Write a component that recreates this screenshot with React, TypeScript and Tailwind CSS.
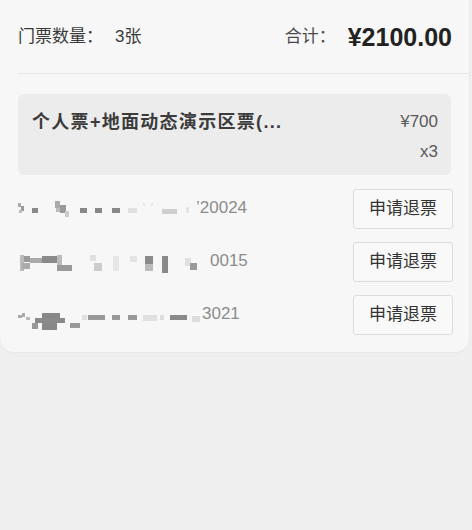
const font = '"Liberation Sans", "Noto Sans CJK SC", sans-serif'

type Block = [number, number, number, number, string]

// mosaic blocks that hide the holder names
const masks: { blocks: Block[]; tail: string; tailX: number }[] = [
  {
    blocks: [
      [0, 6, 3, 4, '#aaa'], [3, 9, 3, 5, '#999'], [1, 13, 3, 3, '#bbb'], [14, 11, 6, 5, '#8a8a8a'],
      [37, 4, 5, 7, '#aaa'], [38, 11, 4, 4, '#bbb'], [42, 8, 6, 8, '#999'], [47, 14, 4, 6, '#ccc'],
      [62, 11, 7, 5, '#888'], [77, 11, 7, 5, '#888'], [94, 11, 8, 5, '#888'],
      [110, 11, 9, 5, '#e0e0e0'], [125, 6, 2, 3, '#e8e8e8'], [133, 6, 2, 3, '#e8e8e8'],
      [144, 12, 15, 5, '#cfcfcf'], [168, 10, 3, 6, '#e4e4e4'],
    ],
    tail: '\u201920024',
    tailX: 178,
  },
  {
    blocks: [
      [2, 5, 4, 16, '#bbb'], [6, 6, 6, 6, '#999'], [4, 13, 8, 6, '#aaa'], [12, 8, 12, 5, '#aaa'],
      [24, 6, 15, 7, '#8a8a8a'], [39, 5, 5, 10, '#bbb'], [39, 15, 15, 6, '#999'],
      [72, 5, 6, 6, '#e0e0e0'], [76, 13, 8, 8, '#ccc'], [95, 6, 6, 15, '#e6e6e6'], [112, 6, 7, 6, '#e4e4e4'],
      [127, 6, 8, 8, '#8a8a8a'], [127, 14, 8, 7, '#bbb'], [144, 6, 6, 17, '#8a8a8a'],
      [167, 8, 6, 8, '#e0e0e0'], [172, 13, 7, 7, '#9a9a9a'],
    ],
    tail: '0015',
    tailX: 192,
  },
  {
    blocks: [
      [0, 12, 4, 3, '#aaa'], [4, 10, 3, 4, '#aaa'], [8, 14, 4, 3, '#bbb'],
      [24, 10, 18, 5, '#888'], [17, 15, 30, 5, '#8a8a8a'], [24, 20, 15, 7, '#888'], [14, 20, 6, 6, '#999'], [52, 20, 10, 5, '#999'],
      [64, 12, 5, 5, '#e0e0e0'], [70, 12, 17, 5, '#999'], [94, 12, 8, 5, '#999'], [110, 12, 9, 5, '#999'],
      [125, 12, 14, 6, '#e0e0e0'], [142, 12, 4, 5, '#ddd'], [152, 12, 17, 5, '#8a8a8a'], [174, 13, 8, 6, '#ddd'],
    ],
    tail: '3021',
    tailX: 184,
  },
]

function MaskedName({ blocks, tail, tailX }: { blocks: Block[]; tail: string; tailX: number }) {
  return (
    <div className="relative h-[24px] w-[240px]">
      <svg width="190" height="30" viewBox="0 0 190 30" className="absolute left-0 top-0">
        {blocks.map(([x, y, w, h, c], i) => (
          <rect key={i} x={x} y={y} width={w} height={h} fill={c} />
        ))}
      </svg>
      <span
        className="absolute top-[0px] text-[17px] leading-[22px] text-[#8c8c8c]"
        style={{ left: tailX }}
      >
        {tail}
      </span>
    </div>
  )
}

export default function App() {
  return (
    <div className="min-h-[530px] w-[472px] bg-[#efeff0]" style={{ fontFamily: font }}>
      <div className="w-[469px] rounded-b-[14px] bg-[#f7f7f7] pb-[17px] shadow-[0_1px_2px_rgba(0,0,0,0.04)]">
        {/* summary */}
        <div className="flex h-[73px] items-center justify-between pl-[18px] pr-[17px] pt-[1px]">
          <div className="text-[17px] text-[#3a3a3a]">
            门票数量：<span className="ml-[12px]">3张</span>
          </div>
          <div className="flex items-center">
            <span className="text-[17px] text-[#4a4a4a]">合计：</span>
            <span className="ml-[12px] text-[25px] font-bold leading-none text-[#222]">¥2100.00</span>
          </div>
        </div>
        <div className="ml-[18px] h-[1px] bg-[#e6e6e6]" />

        {/* ticket type */}
        <div className="mx-[18px] mt-[20px] flex h-[81px] justify-between rounded-[6px] bg-[#ececed] pl-[14px] pr-[13px] pt-[16px]">
          <div className="text-[18px] font-bold leading-[24px] tracking-[1.3px] text-[#3c3c3c]">个人票+地面动态演示区票(...</div>
          <div className="flex flex-col items-end text-[17px] leading-[24px] text-[#5a5a5a]">
            <span>¥700</span>
            <span className="mt-[6px]">x3</span>
          </div>
        </div>

        {/* holders */}
        <div className="mt-[14px] flex flex-col gap-[13px] pl-[18px] pr-[16px]">
          {masks.map((m, i) => (
            <div key={i} className="flex h-[40px] items-center justify-between">
              <MaskedName {...m} />
              <button className="flex h-[40px] w-[100px] items-center justify-center rounded-[3px] border border-[#dcdcdc] bg-[#f9f9f9] text-[17px] text-[#333]">
                申请退票
              </button>
            </div>
          ))}
        </div>
      </div>
    </div>
  )
}
